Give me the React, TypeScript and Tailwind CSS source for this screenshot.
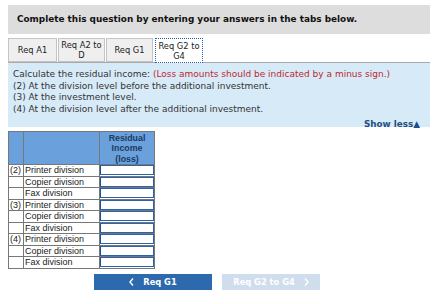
import React from "react";

const rows = [
  { n: "(2)", label: "Printer division" },
  { n: "", label: "Copier division" },
  { n: "", label: "Fax division" },
  { n: "(3)", label: "Printer division" },
  { n: "", label: "Copier division" },
  { n: "", label: "Fax division" },
  { n: "(4)", label: "Printer division" },
  { n: "", label: "Copier division" },
  { n: "", label: "Fax division" },
];

const tabs = [
  { id: "a1", lines: ["Req A1"], w: "w-[49px]" },
  { id: "a2", lines: ["Req A2 to", "D"], w: "w-[47px]" },
  { id: "g1", lines: ["Req G1"], w: "w-[47px]" },
  { id: "g2", lines: ["Req G2 to", "G4"], w: "w-[48px]", active: true },
];

export default function App() {
  return (
    <div className="w-[438px] h-[304px] bg-white pl-2 pr-2 pt-[5px] font-['DejaVu_Sans',sans-serif] text-[#222]">
      <div className="h-[29px] bg-[#dddddd] flex items-center pl-[9px] text-[8.9px] font-bold text-[#111]">
        Complete this question by entering your answers in the tabs below.
      </div>

      <div className="flex items-end gap-[1px] mt-[4px] border-b border-[#a9a9a9] h-[25px]">
        {tabs.map((t) => (
          <div
            key={t.id}
            className={
              t.active
                ? `${t.w} h-[25px] -mb-px bg-white border border-dotted border-[#2a5ea8] flex flex-col items-center justify-center text-[8.3px] leading-[10px] text-[#222] ml-[1px]`
                : `${t.w} h-[24px] bg-[#efefef] border border-[#c4c4c4] flex flex-col items-center justify-center text-[8.3px] leading-[10px] text-[#222]`
            }
          >
            {t.lines.map((l) => (
              <span key={l}>{l}</span>
            ))}
          </div>
        ))}
      </div>

      <div className="bg-[#d7eaf8] h-[64px] pl-[5px] pr-[10px] pt-[6px] text-[9px] leading-[11.5px] text-[#333] flex flex-col">
        <div>
          Calculate the residual income:{" "}
          <span className="text-[#c0282e]">(Loss amounts should be indicated by a minus sign.)</span>
        </div>
        <div>(2) At the division level before the additional investment.</div>
        <div>(3) At the investment level.</div>
        <div>(4) At the division level after the additional investment.</div>
        <div className="flex justify-end mt-auto -mb-[2px] leading-[9px]">
          <span className="font-bold text-[#1f4f86] text-[8.8px]">Show less▲</span>
        </div>
      </div>

      <table className="mt-[4px] border-collapse font-['Liberation_Sans',Arial,sans-serif] text-[9px] leading-[10px] text-[#222]">
        <thead>
          <tr className="bg-[#6aa1dd] h-[33px]">
            <th className="w-[15px] border border-[#777]"></th>
            <th className="w-[76px] border border-[#777]"></th>
            <th className="w-[55px] border border-[#777] font-bold text-[#1d3a5f] text-[8.8px] leading-[10.4px] align-top pt-[1px]">
              Residual
              <br />
              Income
              <br />
              (loss)
            </th>
          </tr>
        </thead>
        <tbody>
          {rows.map((r, i) => (
            <tr key={i} className="h-[11.5px]">
              <td className="border border-[#777] px-[1px] leading-[10px]">{r.n}</td>
              <td className="border border-[#777] px-[1px] leading-[10px] whitespace-nowrap">{r.label}</td>
              <td className="border border-[#777] p-0">
                <div className="h-[10px] bg-white border border-[#2b64ad] border-l-[#1d4f9a]"></div>
              </td>
            </tr>
          ))}
        </tbody>
      </table>

      <div className="flex gap-[10px] ml-[86px] mt-[5px] font-['DejaVu_Sans',sans-serif] text-[8.3px] font-bold text-white">
        <div className="w-[118px] h-[16px] bg-[#2d69ad] flex items-center justify-center gap-[9px]">
          <svg width="5" height="8" viewBox="0 0 5 8" fill="none" stroke="white" strokeWidth="1.4">
            <path d="M4 0.5L1 4L4 7.5" />
          </svg>
          <span>Req G1</span>
        </div>
        <div className="w-[98px] h-[16px] bg-[#cfdded] flex items-center justify-center gap-[9px]">
          <span>Req G2 to G4</span>
          <svg width="5" height="8" viewBox="0 0 5 8" fill="none" stroke="white" strokeWidth="1.4">
            <path d="M1 0.5L4 4L1 7.5" />
          </svg>
        </div>
      </div>
    </div>
  );
}
